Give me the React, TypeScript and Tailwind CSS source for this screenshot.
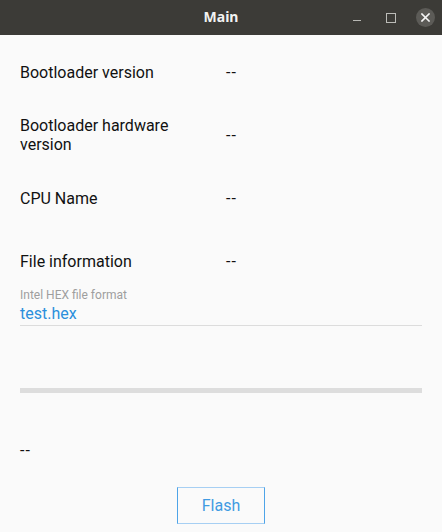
export default function App() {
  return (
    <div className="w-[442px] h-[532px] bg-[#fafafa] flex flex-col overflow-hidden" style={{ fontFamily: 'Roboto, "Noto Sans", sans-serif' }}>
      <TitleBar />
      <div className="flex flex-col px-[20px] text-[16px] text-[#111111]">
        <Row className="mt-[28px]" label="Bootloader version" />
        <Row className="mt-[34px]" label={<>Bootloader hardware<br />version</>} />
        <Row className="mt-[35px]" label="CPU Name" />
        <Row className="mt-[44px]" label="File information" />

        <div className="mt-[17px] text-[12px] leading-[14px] text-[#9e9e9e]">Intel HEX file format</div>
        <div className="mt-[2px] pb-[1px] leading-[20px] text-[#2b8fdc] border-b border-[#dcdcdc]">test.hex</div>

        <div className="mt-[62px] h-[5px] bg-[#dddddd]" />

        <div className="mt-[48px] leading-[19px] tracking-[1px]">--</div>

        <button type="button"
          className="mt-[27px] self-center w-[88px] h-[37px] border border-x-[#4ea4e8] border-y-[#a6cff3] text-[16px] text-[#3f9be2]">
          Flash
        </button>
      </div>
    </div>
  )
}

function TitleBar() {
  return (
    <div className="relative h-[35px] bg-[#3c3b37] flex items-center justify-center shrink-0">
      <span className="text-[14px] font-bold text-[#f2f2f2] -mt-[2px]" style={{ fontFamily: '"Noto Sans", "DejaVu Sans", sans-serif' }}>Main</span>
      <div className="absolute right-[7px] top-0 h-[35px] flex items-center gap-[18px]">
        <span className="w-[8px] h-[1px] bg-[#b8b8b4] mt-[6px]" />
        <span className="w-[10px] h-[10px] border border-[#bcbcb8] ml-[7px]" />
        <span className="w-[19px] h-[19px] rounded-full bg-[#5c5b57] flex items-center justify-center ml-[2px]">
          <svg width="9" height="9" viewBox="0 0 9 9" fill="none" stroke="#f5f5f5" strokeWidth="1.6" strokeLinecap="square">
            <path d="M1 1L8 8M8 1L1 8" />
          </svg>
        </span>
      </div>
    </div>
  )
}

function Row({ label, className }: { label: React.ReactNode; className?: string }) {
  return (
    <div className={`flex items-center leading-[19px] ${className ?? ''}`}>
      <div className="w-[206px]">{label}</div>
      <div className="tracking-[1px]">--</div>
    </div>
  )
}
